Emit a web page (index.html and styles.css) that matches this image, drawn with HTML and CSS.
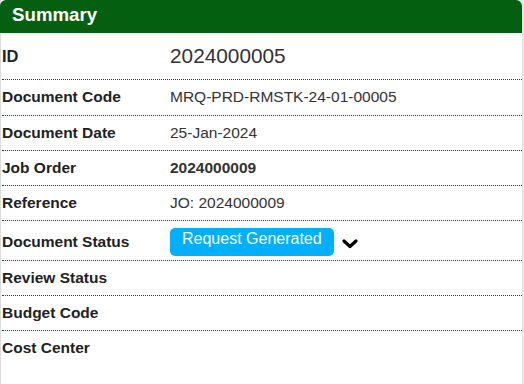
FILE: index.html
```html
<!DOCTYPE html>
<html lang="en">

<head>
    <meta charset="UTF-8" />
    <meta name="viewport" content="width=device-width, initial-scale=1.0" />
    <title>Summary</title>
    <link rel="stylesheet" href="styles.css">
</head>

<body>
    <div class="card">
        <div class="cardHead">Summary</div>
        <div class="rows">
            <div class="row rowId">
                <div class="label">ID</div>
                <div class="value">2024000005</div>
            </div>
            <div class="row rowTall">
                <div class="label">Document Code</div>
                <div class="value">MRQ-PRD-RMSTK-24-01-00005</div>
            </div>
            <div class="row">
                <div class="label">Document Date</div>
                <div class="value">25-Jan-2024</div>
            </div>
            <div class="row">
                <div class="label">Job Order</div>
                <div class="value strong">2024000009</div>
            </div>
            <div class="row">
                <div class="label">Reference</div>
                <div class="value">JO: 2024000009</div>
            </div>
            <div class="row rowStatus">
                <div class="label">Document Status</div>
                <div class="value statusCell">
                    <span class="badge">Request Generated</span>
                    <svg class="chevron" width="16" height="10" viewBox="0 0 16 10">
                        <polyline points="2,2 8,7.5 14,2" fill="none" stroke="#000" stroke-width="3.2"
                            stroke-linecap="round" stroke-linejoin="round" />
                    </svg>
                </div>
            </div>
            <div class="row">
                <div class="label">Review Status</div>
                <div class="value"></div>
            </div>
            <div class="row">
                <div class="label">Budget Code</div>
                <div class="value"></div>
            </div>
            <div class="row last">
                <div class="label">Cost Center</div>
                <div class="value"></div>
            </div>
        </div>
    </div>
</body>

</html>
```

FILE: styles.css
```css
:root {
    --green: #045f10;
    --line: #0a5512;
    --blue: #00b0ff;
    --text: #222;
    --value: #333;
    --base-font: 'Liberation Sans', Arial, sans-serif;
}

html,
body {
    margin: 0;
    padding: 0;
    background: #fff;
    font-family: var(--base-font);
    color: var(--text);
}

.card {
    width: 521px;
    height: 384px;
    border-left: 1px solid #dcdcdc;
    border-right: 2px solid #e6e6e6;
}

.cardHead {
    box-sizing: border-box;
    height: 33px;
    margin-left: -1px;
    padding: 4px 0 0 12px;
    line-height: 22px;
    font-size: 18.7px;
    font-weight: bold;
    color: #fff;
    background: var(--green);
    border-top-left-radius: 6px;
    border-top-right-radius: 6px;
}

.rows {
    padding-left: 1px;
}

.row {
    display: grid;
    grid-template-columns: 168px 1fr;
    align-items: center;
    padding: 8px 0;
    line-height: 18px;
    font-size: 15.5px;
    border-bottom: 1px dotted var(--line);
}

.row.last {
    border-bottom: none;
}

.rowId {
    padding: 11px 0;
    line-height: 24px;
}

.rowId .label {
    font-size: 16.5px;
}

.rowTall {
    padding-bottom: 9px;
}

.rowStatus {
    padding: 7px 0 4px;
}

.label {
    font-weight: bold;
    color: var(--text);
}

.value {
    color: var(--value);
}

.rowId .value {
    font-size: 20.8px;
}

.strong {
    font-weight: bold;
}

.statusCell {
    display: flex;
    align-items: center;
    gap: 8px;
}

.badge {
    display: inline-block;
    padding: 2px 12px 8px 12px;
    line-height: 18px;
    font-size: 16px;
    color: #fff;
    background: var(--blue);
    border-radius: 5px;
}

.chevron {
    margin-top: 3px;
}
```
